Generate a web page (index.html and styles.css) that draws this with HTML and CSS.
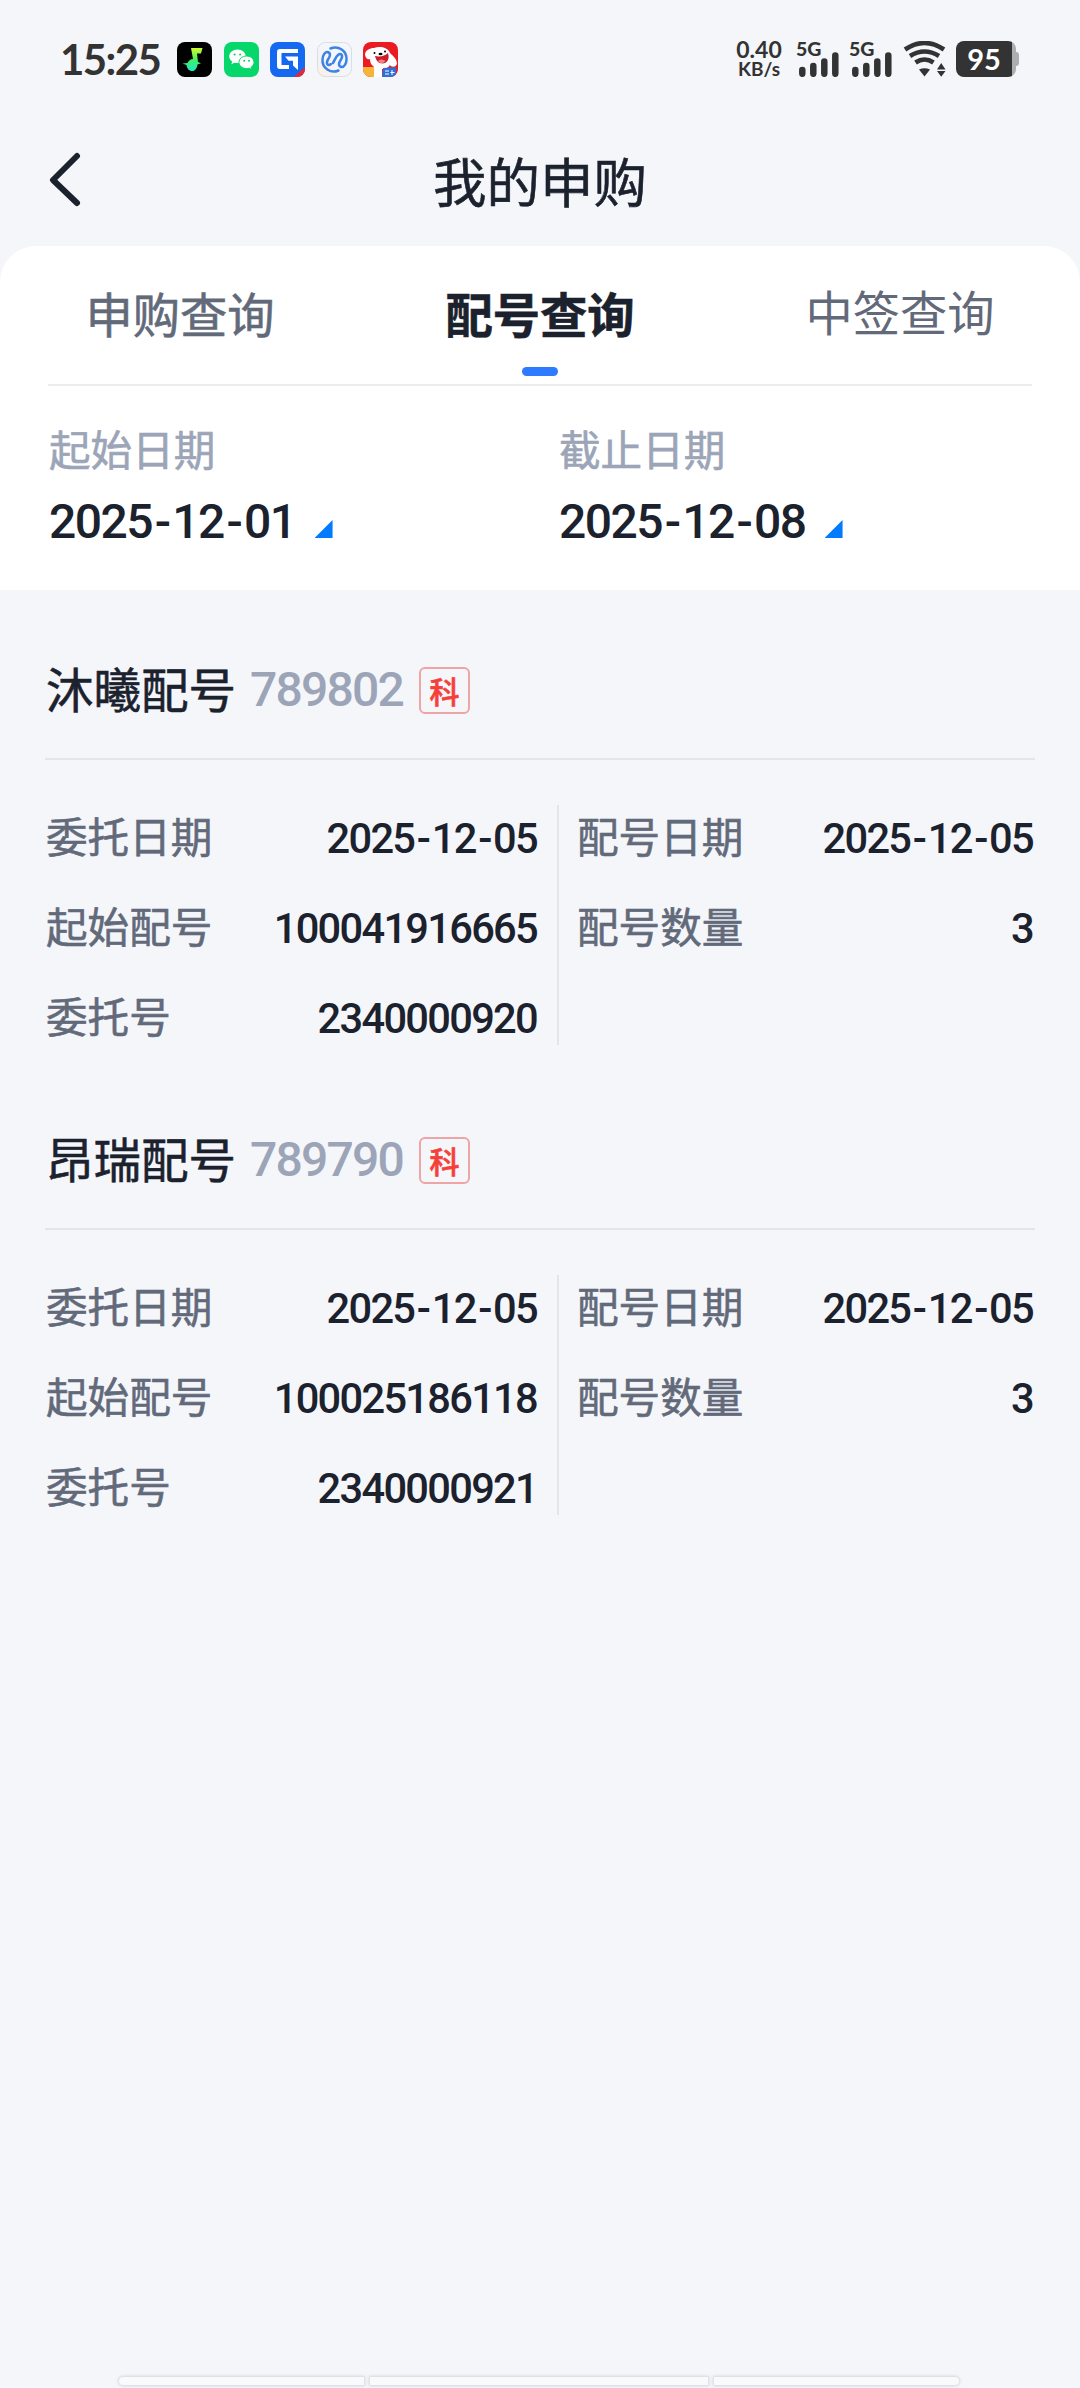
FILE: index.html
```html
<!DOCTYPE html>
<html lang="zh-CN">
<head>
    <meta charset="UTF-8">
    <title>我的申购</title>
    <meta name="viewport" content="width=device-width">
    <link rel="stylesheet" href="styles.css">
</head>
<body>
    <div class="status">
        <span class="time">15:25</span>
        <div class="apps">
            <svg viewBox="0 0 35 35">
                <defs>
                    <linearGradient id="note" x1="0" y1="0" x2="0" y2="1">
                        <stop offset="0" stop-color="#d4f92c"/>
                        <stop offset="0.55" stop-color="#3df06a"/>
                        <stop offset="1" stop-color="#1fe6c8"/>
                    </linearGradient>
                </defs>
                <rect width="35" height="35" rx="8" fill="#000"/>
                <path fill="url(#note)" d="M14 6h11.500l-1.500 5.500h-4l1 8.500l3 1.200l-3.500 1.200c-.5 4-2.500 6.600-5.500 6.600c-3 0-5-2.200-5.500-6l-4-1.400l5-.6c1-2.400 3-3.800 5.500-4z"/>
            </svg>
            <svg viewBox="0 0 35 35">
                <rect width="35" height="35" rx="8" fill="#05d76a"/>
                <path fill="#fff" d="M13.500 7.500c-4.600 0-8.300 3-8.300 6.800c0 2.200 1.200 4 3 5.300l-.8 2.600l3-1.500c1 .3 2 .4 3.100.4c4.600 0 8.300-3 8.300-6.800s-3.700-6.800-8.300-6.800z"/>
                <path fill="#fff" stroke="#05d76a" d="M22.500 14c-4.200 0-7.500 2.800-7.500 6.300s3.300 6.300 7.500 6.300c.9 0 1.800-.1 2.600-.4l2.700 1.400l-.7-2.400c1.800-1.200 2.900-2.900 2.900-4.900c0-3.500-3.300-6.300-7.500-6.300z"/>
                <g fill="#05d76a">
                    <circle cx="10.600" cy="12.500" r="1.100"/>
                    <circle cx="16.200" cy="12.500" r="1.100"/>
                    <circle cx="20.200" cy="18.700" r="1"/>
                    <circle cx="25" cy="18.700" r="1"/>
                </g>
            </svg>
            <svg viewBox="0 0 35 35">
                <defs>
                    <clipPath id="tile"><rect width="35" height="35" rx="8"/></clipPath>
                </defs>
                <g clip-path="url(#tile)">
                    <rect width="35" height="35" fill="#1569f0"/>
                    <path fill="#ea2530" d="M35 25v10h-11z"/>
                </g>
                <path fill="#fff" d="M10 7h18v4H11.500v12H19v4H10q-3 0-3-3V10q0-3 3-3zM15 14.500h13V28l-5-4.500v-4.700h-4.500z"/>
            </svg>
            <svg viewBox="0 0 35 35">
                <defs>
                    <linearGradient id="pale" x1="1" y1="0" x2="0" y2="1">
                        <stop offset="0.500" stop-color="#f3f6fb"/>
                        <stop offset="1" stop-color="#fdeee4"/>
                    </linearGradient>
                </defs>
                <rect x="0.500" y="0.500" width="34" height="34" rx="8" fill="url(#pale)" stroke="#d9dde4"/>
                <g fill="none" stroke="#3d83e6" stroke-width="2.500" stroke-linecap="round">
                    <path d="M13.500 6.500c8-3.500 16.500 2.500 16 11c0 4-2.500 8-5 7.500c-3.500-1-3-4-.5-7.500c2.500-4 0-7-3-4.500c-2.500 2-3 5-5 8"/>
                    <path d="M21.500 28.500c-8 3.500-16.500-2.500-16-11c0-4 2.500-8 5-7.500c3.500 1 3 4 .5 7.500c-2.500 4 0 7 3 4.500"/>
                </g>
            </svg>
            <svg viewBox="0 0 35 35">
                <g clip-path="url(#tile)">
                    <rect width="35" height="35" fill="#ea1c22"/>
                    <path fill="#fff" d="M2 13c0-5 5-7 9-7c5-2 14-1 16 5c3 3 7 6 7 11c-2 4-6 3-7 1c-2 3-5 4-8 4v8h-8V25c-3-2-4-5-4-8c-2 1-4 0-5-4z"/>
                    <path fill="#c9202a" d="M12 14c5 1 10 0 13-3c2 6-1 10.500-5.500 10.500S13 18 12 14z"/>
                    <path fill="#f58088" d="M15 19c2-2 5-2 7.500 0c-2 2.500-5 3-7.500 0z"/>
                    <path fill="#f6b43b" d="M0 25h11v10H0z"/>
                    <path fill="#2f6fd6" d="M20 26l13-1v10H19z"/>
                    <path stroke="#fff" d="M22 29h4M22 32h4M29 28v5M27.500 30.500h4"/>
                </g>
                <ellipse cx="17.500" cy="12" rx="2" ry="1.300"/>
                <circle cx="11.500" cy="11" r="1"/>
                <circle cx="22" cy="9.500" r="1"/>
            </svg>
        </div>
        <div class="speed">
            <span class="rate">0.40</span>
            <span class="unit">KB/s</span>
        </div>
        <div class="signal">
            <span>5G</span>
            <svg viewBox="0 0 42 36">
                <path d="M5.300 29v3.800M16.300 25v7.800M27.300 20.500v12.300M38.300 14.500v18.300"/>
            </svg>
        </div>
        <div class="signal">
            <span>5G</span>
            <svg viewBox="0 0 42 36">
                <path d="M5.300 29v3.800M16.300 25v7.800M27.300 20.500v12.300M38.300 14.500v18.300"/>
            </svg>
        </div>
        <svg class="wifi" viewBox="0 0 44 36">
            <path class="arc" d="M2 8.500q19.500-13 39 0M7 15q14.500-9 29 0M12.500 21.500q9-6 18 0"/>
            <path d="M16 28.500q5.500-2.500 11 0l-5.500 7zM34 28.500l4.200-6.500l4.300 6.500zM34 30l4.200 5.800l4.300-5.800z"/>
        </svg>
        <div class="battery"><span>95</span></div>
    </div>

    <header>
        <svg class="back" viewBox="0 0 32 56">
            <path d="M28 4L4 28L28 51"/>
        </svg>
        <h1>我的申购</h1>
    </header>

    <section class="filter">
        <nav class="tabs">
            <a class="tab">申购查询</a>
            <a class="tab active">配号查询</a>
            <a class="tab last">中签查询</a>
        </nav>
        <div class="dates">
            <div class="date">
                <label>起始日期</label>
                <p class="num">2025<i>-</i>12<i>-</i>01</p>
            </div>
            <div class="date">
                <label>截止日期</label>
                <p class="num">2025<i>-</i>12<i>-</i>08</p>
            </div>
        </div>
    </section>

    <main>
        <article>
            <h2>沐曦配号 <span class="code num">789802</span><span class="tag">科</span></h2>
            <div class="detail">
                <dl>
                    <dt>委托日期</dt><dd class="num">2025<i>-</i>12<i>-</i>05</dd>
                    <dt>起始配号</dt><dd class="num">100041916665</dd>
                    <dt>委托号</dt><dd class="num">2340000920</dd>
                </dl>
                <dl>
                    <dt>配号日期</dt><dd class="num">2025<i>-</i>12<i>-</i>05</dd>
                    <dt>配号数量</dt><dd class="num">3</dd>
                </dl>
            </div>
        </article>
        <article>
            <h2>昂瑞配号 <span class="code num">789790</span><span class="tag">科</span></h2>
            <div class="detail">
                <dl>
                    <dt>委托日期</dt><dd class="num">2025<i>-</i>12<i>-</i>05</dd>
                    <dt>起始配号</dt><dd class="num">100025186118</dd>
                    <dt>委托号</dt><dd class="num">2340000921</dd>
                </dl>
                <dl>
                    <dt>配号日期</dt><dd class="num">2025<i>-</i>12<i>-</i>05</dd>
                    <dt>配号数量</dt><dd class="num">3</dd>
                </dl>
            </div>
        </article>
    </main>

    <footer>
        <span></span>
        <span></span>
        <span></span>
    </footer>
</body>
</html>
```

FILE: styles.css
```css
*{
    padding: 0;
    margin: 0;
    box-sizing: border-box;
}
body{
    display: flex;
    flex-direction: column;
    height: 2388px;
    overflow: hidden;
    background-color: #f5f6fa;
    color: #1b222e;
    font-family: "Noto Sans CJK SC", sans-serif;
    font-size: 41.600px;
}
h1, h2, dt, label, .tab{
    -webkit-text-stroke: 0.600px currentColor;
}
.num{
    font-family: Roboto, "Noto Sans CJK SC", sans-serif;
    font-weight: 500;
    -webkit-text-stroke: 0;
}
.num i{
    display: inline-block;
    width: 0.42em;
    font-style: normal;
    text-align: center;
}

/* status bar */
.status{
    display: flex;
    align-items: center;
    height: 118px;
    padding: 0 60px;
    color: #333;
    font-family: Lato, sans-serif;
    font-weight: 700;
}
.time{
    width: 117px;
    font-size: 42px;
    font-weight: 700;
    letter-spacing: -1.600px;
}
.apps{
    display: flex;
    gap: 11.600px;
}
.apps svg{
    width: 35px;
    height: 35px;
}
.speed{
    display: flex;
    flex-direction: column;
    align-items: center;
    width: 50px;
    margin-left: auto;
    line-height: 20px;
}
.rate{
    font-size: 23px;
}
.unit{
    font-size: 19px;
}
.signal{
    position: relative;
    width: 42px;
    height: 36px;
    margin-left: 13px;
}
.signal + .signal{
    margin-left: 11px;
}
.signal span{
    position: absolute;
    left: -1px;
    top: -2px;
    font-size: 19.500px;
    font-weight: 900;
    line-height: 19px;
}
.signal svg{
    display: block;
}
.signal path{
    stroke: #333;
    stroke-width: 6.500;
    stroke-linecap: round;
}
.wifi{
    width: 44px;
    height: 36px;
    margin: 0 9px 0 11px;
    fill: #333;
}
.wifi .arc{
    fill: none;
    stroke: #333;
    stroke-width: 4.600;
}
.battery{
    position: relative;
    width: 60px;
    height: 36px;
    margin-right: 4px;
    border-radius: 8px;
    background: linear-gradient(90deg, #333 56px, #adaeb1 56px);
    color: #fff;
    font-size: 29px;
    line-height: 36px;
    text-align: center;
}
.battery span{
    margin-right: 4px;
}
.battery::after{
    content: "";
    position: absolute;
    right: -3px;
    top: 11px;
    width: 3px;
    height: 14px;
    border-radius: 0 3px 3px 0;
    background-color: #adaeb1;
}

/* title */
header{
    display: grid;
    grid-template-columns: 200px 1fr 200px;
    align-items: center;
    height: 128px;
}
.back{
    width: 32px;
    height: 56px;
    margin: -4px 0 0 49px;
    fill: none;
    stroke: #1b222e;
    stroke-width: 6;
    stroke-linecap: round;
    stroke-linejoin: round;
}
h1{
    padding-bottom: 5px;
    font-size: 53.500px;
    font-weight: 400;
    text-align: center;
}

/* tabs and date range */
.filter{
    height: 344px;
    padding: 0 48px;
    border-radius: 36px 36px 0 0;
    background-color: #fff;
}
.tabs{
    display: grid;
    grid-template-columns: repeat(3, 1fr);
    height: 140px;
    margin: 0 -48px;
    background: linear-gradient(#ebecee, #ebecee) no-repeat center bottom / 984px 2px;
}
.tab{
    position: relative;
    color: #626a7a;
    font-size: 47.300px;
    line-height: 134px;
    text-align: center;
}
.tab.last{
    line-height: 130px;
    -webkit-text-stroke: 0;
}
.tab.active{
    color: #1b222e;
    font-weight: 700;
}
.tab.active::after{
    content: "";
    position: absolute;
    left: 50%;
    bottom: 10px;
    width: 36px;
    height: 9px;
    margin-left: -18px;
    border-radius: 5px;
    background-color: #2f7bff;
}
.dates{
    display: grid;
    grid-template-columns: 510px 1fr;
    padding: 32px 0 0 1px;
}
.date label{
    display: block;
    color: #9ca5b8;
    line-height: 60px;
}
.date p{
    font-size: 48px;
    line-height: 60px;
    margin-top: 14px;
    letter-spacing: -1.500px;
}
.date p::after{
    content: "";
    display: inline-block;
    width: 18px;
    height: 18px;
    margin-left: 19px;
    background-color: #007aff;
    clip-path: polygon(100% 0, 100% 100%, 0 100%);
}

/* allotment list */
main{
    flex: 1;
    padding: 0 45px;
}
article{
    height: 470px;
}
h2{
    display: flex;
    align-items: center;
    height: 170px;
    padding: 26px 0 0 1px;
    border-bottom: 2px solid #e3e5e9;
    font-size: 47.500px;
    font-weight: 400;
}
.code{
    margin: 4px 0 0 14px;
    color: #9ca5b8;
    font-size: 48px;
    letter-spacing: -1.800px;
}
.tag{
    width: 51px;
    height: 47px;
    margin: 7px 0 0 16px;
    border: 2px solid #eda5a5;
    border-radius: 6px;
    color: #f5403a;
    font-size: 30px;
    font-weight: 500;
    line-height: 43px;
    text-align: center;
}
.detail{
    display: grid;
    grid-template-columns: 512px 1fr;
    height: 240px;
    margin-top: 45px;
}
dl{
    display: grid;
    grid-template-columns: auto 1fr;
    grid-auto-rows: 60px;
    row-gap: 30px;
    line-height: 61px;
}
dl:first-child{
    padding: 0 18px 0 1px;
}
dl:last-child{
    padding-left: 18px;
    border-left: 2px solid #e3e5e9;
}
dt{
    color: #626a7a;
}
dd{
    padding-right: 2px;
    line-height: 67px;
    text-align: right;
    letter-spacing: -1.700px;
}

/* keyboard handle */
footer{
    display: grid;
    grid-template-columns: 245px 338px 245px;
    gap: 6px;
    height: 11px;
    padding-left: 119px;
}
footer span{
    height: 8px;
    background-color: #f8fafc;
    box-shadow: 0 0 3px 1px #d3d5d9;
}
footer span:first-child{
    border-radius: 4px 0 0 4px;
}
footer span:last-child{
    border-radius: 0 4px 4px 0;
}
```
